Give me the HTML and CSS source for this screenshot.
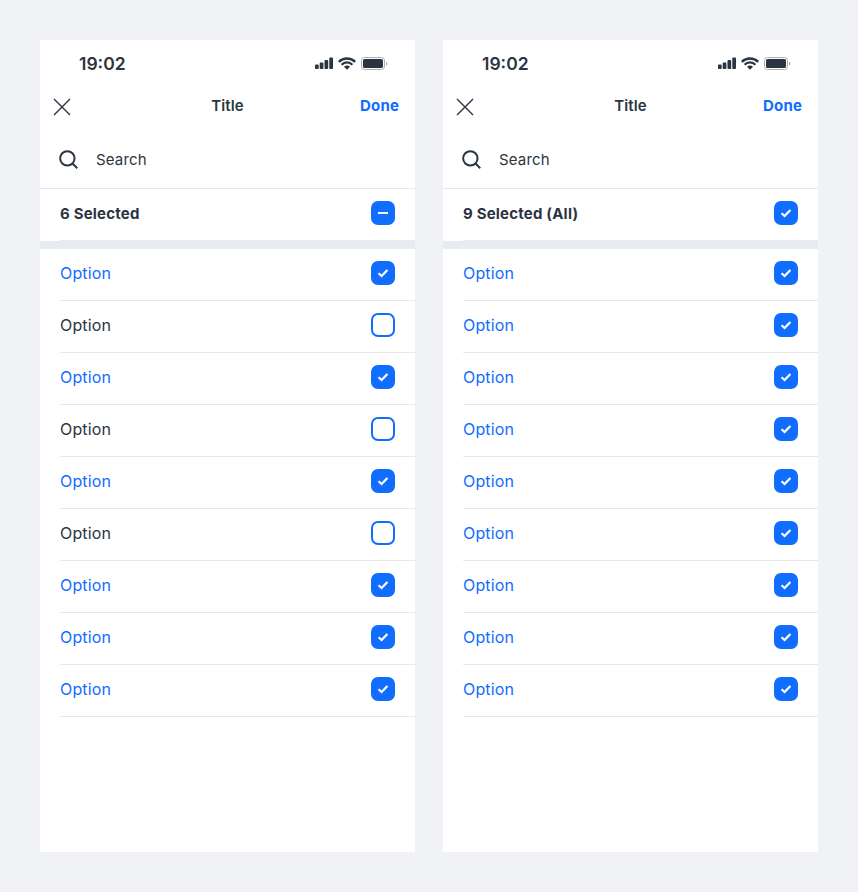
FILE: index.html
```html
<!DOCTYPE html>
<html lang="en">
<head>
  <meta charset="UTF-8" />
  <meta name="viewport" content="width=device-width, initial-scale=1.0"/>
  <title>Multi select</title>
  <link rel="stylesheet" href="styles.css">
</head>
<body>

  <svg class="defs" width="0" height="0">
    <symbol id="i-signal" viewBox="0 0 18 12">
      <rect x="0" y="7.5" width="3.7" height="4.5" rx="0.9"/>
      <rect x="4.7" y="5.5" width="3.7" height="6.5" rx="0.9"/>
      <rect x="9.5" y="3" width="3.7" height="9" rx="0.9"/>
      <rect x="14.3" y="0.5" width="3.7" height="11.5" rx="0.9"/>
    </symbol>
    <symbol id="i-wifi" viewBox="0 0 18 13">
      <path d="M0.8 4.9a11.6 11.6 0 0 1 16.4 0M3.6 7.7a7.6 7.6 0 0 1 10.8 0" fill="none" stroke="currentColor" stroke-width="2.3"/>
      <path d="M6 9.7a4.2 4.2 0 0 1 6 0L9 12.8z"/>
    </symbol>
    <symbol id="i-battery" viewBox="0 0 27 13">
      <rect x="0.5" y="0.5" width="23" height="12" rx="3" fill="none" stroke="#a9aeb5"/>
      <rect x="2" y="2" width="20" height="9" rx="1.6"/>
      <rect x="25" y="4.8" width="1.2" height="3.6" rx="0.6" fill="#a9aeb5"/>
    </symbol>
    <symbol id="i-close" viewBox="0 0 18 18">
      <path d="M1 1l16 16M17 1L1 17" fill="none" stroke="currentColor" stroke-width="1.4"/>
    </symbol>
    <symbol id="i-search" viewBox="0 0 20 20">
      <circle cx="8.8" cy="8.8" r="7.6" fill="none" stroke="currentColor" stroke-width="2.1"/>
      <path d="M14 14l5.2 5.2" fill="none" stroke="currentColor" stroke-width="2.1"/>
    </symbol>
    <symbol id="i-check" viewBox="0 0 24 24">
      <path d="M7.6 12.3l3 2.7 5.8-5.9" fill="none" stroke="#fff" stroke-width="2.2"/>
    </symbol>
    <symbol id="i-minus" viewBox="0 0 24 24">
      <path d="M7 12h10" fill="none" stroke="#fff" stroke-width="2"/>
    </symbol>
  </svg>

  <div class="board">

    <!-- SOME SELECTED -->
    <div class="phone">
      <div class="status-bar">
        <span class="time">19:02</span>
        <div class="status-icons">
          <svg class="signal"><use href="#i-signal"/></svg>
          <svg class="wifi"><use href="#i-wifi"/></svg>
          <svg class="battery"><use href="#i-battery"/></svg>
        </div>
      </div>
      <div class="nav-bar">
        <svg class="close"><use href="#i-close"/></svg>
        <span class="nav-title">Title</span>
        <span class="nav-done">Done</span>
      </div>
      <div class="search">
        <svg class="search-icon"><use href="#i-search"/></svg>
        <span>Search</span>
      </div>
      <div class="row row-head">
        <span>6 Selected</span>
        <span class="box on"><svg><use href="#i-minus"/></svg></span>
      </div>
      <div class="band"></div>
      <div class="row picked"><span>Option</span><span class="box on"><svg><use href="#i-check"/></svg></span></div>
      <div class="row"><span>Option</span><span class="box"></span></div>
      <div class="row picked"><span>Option</span><span class="box on"><svg><use href="#i-check"/></svg></span></div>
      <div class="row"><span>Option</span><span class="box"></span></div>
      <div class="row picked"><span>Option</span><span class="box on"><svg><use href="#i-check"/></svg></span></div>
      <div class="row"><span>Option</span><span class="box"></span></div>
      <div class="row picked"><span>Option</span><span class="box on"><svg><use href="#i-check"/></svg></span></div>
      <div class="row picked"><span>Option</span><span class="box on"><svg><use href="#i-check"/></svg></span></div>
      <div class="row picked"><span>Option</span><span class="box on"><svg><use href="#i-check"/></svg></span></div>
    </div>

    <!-- ALL SELECTED -->
    <div class="phone">
      <div class="status-bar">
        <span class="time">19:02</span>
        <div class="status-icons">
          <svg class="signal"><use href="#i-signal"/></svg>
          <svg class="wifi"><use href="#i-wifi"/></svg>
          <svg class="battery"><use href="#i-battery"/></svg>
        </div>
      </div>
      <div class="nav-bar">
        <svg class="close"><use href="#i-close"/></svg>
        <span class="nav-title">Title</span>
        <span class="nav-done">Done</span>
      </div>
      <div class="search">
        <svg class="search-icon"><use href="#i-search"/></svg>
        <span>Search</span>
      </div>
      <div class="row row-head">
        <span>9 Selected (All)</span>
        <span class="box on"><svg><use href="#i-check"/></svg></span>
      </div>
      <div class="band"></div>
      <div class="row picked"><span>Option</span><span class="box on"><svg><use href="#i-check"/></svg></span></div>
      <div class="row picked"><span>Option</span><span class="box on"><svg><use href="#i-check"/></svg></span></div>
      <div class="row picked"><span>Option</span><span class="box on"><svg><use href="#i-check"/></svg></span></div>
      <div class="row picked"><span>Option</span><span class="box on"><svg><use href="#i-check"/></svg></span></div>
      <div class="row picked"><span>Option</span><span class="box on"><svg><use href="#i-check"/></svg></span></div>
      <div class="row picked"><span>Option</span><span class="box on"><svg><use href="#i-check"/></svg></span></div>
      <div class="row picked"><span>Option</span><span class="box on"><svg><use href="#i-check"/></svg></span></div>
      <div class="row picked"><span>Option</span><span class="box on"><svg><use href="#i-check"/></svg></span></div>
      <div class="row picked"><span>Option</span><span class="box on"><svg><use href="#i-check"/></svg></span></div>
    </div>

  </div>

</body>
</html>
```

FILE: styles.css
```css
body {
  font-family: 'Inter', 'Liberation Sans', sans-serif;
  background: #f0f2f6;
  color: #2b3542;
  margin: 0;
}

.defs {
  display: block;
  height: 0;
}

.board {
  display: flex;
  gap: 28px;
  padding: 40px;
}

.phone {
  width: 375px;
  height: 812px;
  background: #fff;
}

.status-bar {
  height: 44px;
  padding: 2px 27px 0 39px;
  display: flex;
  justify-content: space-between;
  align-items: center;
  box-sizing: border-box;
}

.time {
  font-size: 17.5px;
  font-weight: 600;
}

.status-icons {
  display: flex;
  align-items: center;
  gap: 5px;
  fill: #2b3542;
  color: #2b3542;
}

.signal {
  width: 18px;
  height: 12px;
}

.wifi {
  width: 18px;
  height: 13px;
}

.battery {
  width: 27px;
  height: 13px;
}

.nav-bar {
  height: 44px;
  padding: 0 16px 2px 13px;
  display: flex;
  justify-content: space-between;
  align-items: center;
  position: relative;
  box-sizing: border-box;
}

.close {
  width: 18px;
  height: 18px;
  margin-top: 4px;
  color: #2b3542;
}

.nav-title {
  position: absolute;
  left: 0;
  right: 0;
  text-align: center;
  font-size: 15px;
  font-weight: 600;
  letter-spacing: 0.1px;
}

.nav-done {
  font-size: 15px;
  font-weight: 700;
  letter-spacing: 0.15px;
  color: #116dff;
}

.search {
  height: 61px;
  padding: 2px 20px 0 19px;
  display: flex;
  align-items: center;
  gap: 18px;
  font-size: 15px;
  letter-spacing: 0.15px;
  border-bottom: 1px solid #e5e8ec;
  box-sizing: border-box;
}

.search-icon {
  width: 19px;
  height: 19px;
  color: #2b3542;
}

.row {
  height: 52px;
  margin-left: 20px;
  padding: 0 20px 3px 0;
  display: flex;
  justify-content: space-between;
  align-items: center;
  font-size: 16px;
  letter-spacing: 0.15px;
  border-bottom: 1px solid #e5e8ec;
  box-sizing: border-box;
}

.row-head {
  font-size: 15px;
  font-weight: 700;
  letter-spacing: 0.2px;
}

.band {
  height: 8px;
  background: #e8ebf0;
}

.picked {
  color: #116dff;
}

.box {
  width: 24px;
  height: 24px;
  box-sizing: border-box;
  border: 2px solid #116dff;
  border-radius: 7px;
}

.box.on {
  border: 0;
  background: #116dff;
}

.box svg {
  display: block;
  width: 24px;
  height: 24px;
}
```
